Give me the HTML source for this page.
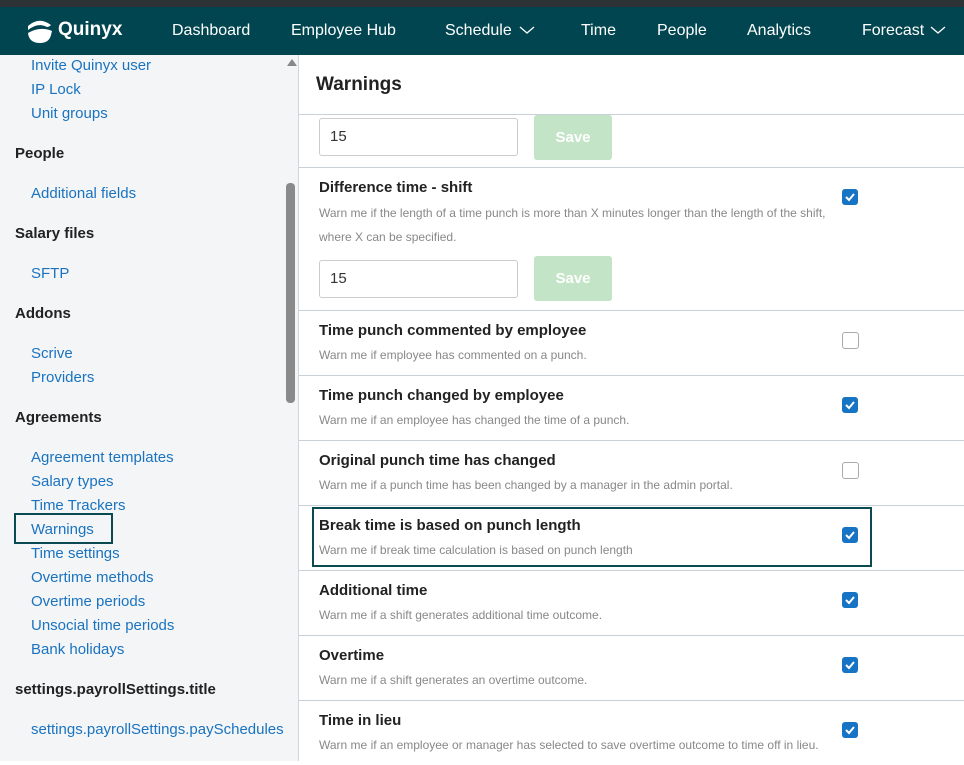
<html><head><style>
body{margin:0;width:964px;height:761px;overflow:hidden;font-family:"Liberation Sans",sans-serif;background:#fff;position:relative}
.top{position:absolute;left:0;top:0;width:964px;height:7px;background:#2d3236}
.hdr{position:absolute;left:0;top:7px;width:964px;height:48px;background:#00454f;color:#fff;font-size:16px}
.hdr span{position:absolute;top:15px;white-space:nowrap}
.hdr svg.ch{position:absolute;top:19px}
.side{position:absolute;left:0;top:55px;width:298px;height:706px;background:#f4f5f7;border-right:1px solid #cfd6dd}
.side div{position:absolute;font-size:15px}
.l{left:31px;color:#1a73c0}
.h{left:15px;font-weight:bold;color:#222}
.sb{position:absolute;left:286px;top:183px;width:9px;height:220px;background:#8a8a8a;border-radius:4px}
.main{position:absolute;left:299px;top:55px;right:0;bottom:0}
.row{position:absolute;left:0;right:0;border-top:1px solid #c8d0d8}
.t{position:absolute;left:20px;font-weight:bold;font-size:15px;color:#222}
.d{position:absolute;left:20px;font-size:12px;color:#888;white-space:nowrap}
.cb{position:absolute;left:543px;width:16px;height:16px;border-radius:3px;background:#1773c4}
.cb svg{position:absolute;left:2px;top:2px}
.cb.off{background:#fff;border:1px solid #aaa;width:15px;height:15px}
.in{position:absolute;left:20px;width:199px;height:38px;border:1px solid #ccc;border-radius:3px;font-size:15px;color:#333;line-height:36px;text-indent:10px;box-sizing:border-box}
.sv{position:absolute;left:235px;width:78px;height:45px;background:#c3e4c6;border-radius:3px;color:#fff;font-weight:bold;font-size:15px;text-align:center;line-height:45px}
</style></head><body>
<div class="top"></div>
<div class="hdr">
<svg style="position:absolute;left:26px;top:10px" width="27" height="27" viewBox="0 0 27 27"><path d="M2 9 Q13 -1 25 8 Q23 10 21 10 Q12 5 2 13Z M2 16 Q14 9 26 14 L25 18 Q23 26 14 26 Q3 26 2 16Z" fill="#fff"/></svg>
<span style="left:58px;top:12px;font-weight:bold;font-size:19px">Quinyx</span>
<span style="left:172px">Dashboard</span><span style="left:291px">Employee Hub</span><span style="left:445px">Schedule</span><svg class="ch" style="left:519px" width="16" height="9"><path d="M1 1l7 6 7-6" stroke="#fff" stroke-width="1.3" fill="none"/></svg><span style="left:581px">Time</span><span style="left:657px">People</span><span style="left:747px">Analytics</span><span style="left:862px">Forecast</span><svg class="ch" style="left:930px" width="16" height="9"><path d="M1 1l7 6 7-6" stroke="#fff" stroke-width="1.3" fill="none"/></svg>
</div>
<div class="side">
<div class="l" style="top:2px">Invite Quinyx user</div>
<div class="l" style="top:26px">IP Lock</div>
<div class="l" style="top:50px">Unit groups</div>
<div class="h" style="top:90px">People</div>
<div class="l" style="top:130px">Additional fields</div>
<div class="h" style="top:170px">Salary files</div>
<div class="l" style="top:210px">SFTP</div>
<div class="h" style="top:250px">Addons</div>
<div class="l" style="top:290px">Scrive</div>
<div class="l" style="top:314px">Providers</div>
<div class="h" style="top:354px">Agreements</div>
<div class="l" style="top:394px">Agreement templates</div>
<div class="l" style="top:418px">Salary types</div>
<div class="l" style="top:442px">Time Trackers</div>
<div style="left:14px;top:458px;width:99px;height:31px;border:2px solid #0b4a50;box-sizing:border-box"></div>
<div class="l" style="top:466px">Warnings</div>
<div class="l" style="top:490px">Time settings</div>
<div class="l" style="top:514px">Overtime methods</div>
<div class="l" style="top:538px">Overtime periods</div>
<div class="l" style="top:562px">Unsocial time periods</div>
<div class="l" style="top:586px">Bank holidays</div>
<div class="h" style="top:626px">settings.payrollSettings.title</div>
<div class="l" style="top:666px;white-space:nowrap">settings.payrollSettings.paySchedules</div>
<div style="left:287px;top:4px;width:0;height:0;border-left:5px solid transparent;border-right:5px solid transparent;border-bottom:7px solid #888"></div>
</div>
<div class="sb"></div>
<div class="main">
<div style="position:absolute;left:17px;top:19px;font-weight:bold;font-size:19px;color:#222">Warnings</div>
<div class="row" style="top:59px;height:53px"><div class="in" style="top:3px">15</div><div class="sv" style="top:0">Save</div></div>
<div class="row" style="top:112px;height:143px">
<div class="t" style="top:11px">Difference time - shift</div><div class="cb" style="top:21px"><svg width="12" height="12"><path d="M2 6l3 3 5-6" stroke="#fff" stroke-width="2" fill="none"/></svg></div>
<div class="d" style="top:33px;line-height:24px;white-space:normal;width:525px">Warn me if the length of a time punch is more than X minutes longer than the length of the shift, where X can be specified.</div>
<div class="in" style="top:92px">15</div><div class="sv" style="top:88px">Save</div></div>
<div class="row" style="top:255px;height:64px"><div class="t" style="top:11px">Time punch commented by employee</div><div class="d" style="top:37px">Warn me if employee has commented on a punch.</div><div class="cb off" style="top:21px"></div></div>
<div class="row" style="top:320px;height:64px"><div class="t" style="top:11px">Time punch changed by employee</div><div class="d" style="top:37px">Warn me if an employee has changed the time of a punch.</div><div class="cb" style="top:21px"><svg width="12" height="12"><path d="M2 6l3 3 5-6" stroke="#fff" stroke-width="2" fill="none"/></svg></div></div>
<div class="row" style="top:385px;height:64px"><div class="t" style="top:11px">Original punch time has changed</div><div class="d" style="top:37px">Warn me if a punch time has been changed by a manager in the admin portal.</div><div class="cb off" style="top:21px"></div></div>
<div class="row" style="top:450px;height:64px"><div style="position:absolute;left:13px;top:1px;width:560px;height:60px;border:2px solid #0b4a50;box-sizing:border-box"></div><div class="t" style="top:11px">Break time is based on punch length</div><div class="d" style="top:37px">Warn me if break time calculation is based on punch length</div><div class="cb" style="top:21px"><svg width="12" height="12"><path d="M2 6l3 3 5-6" stroke="#fff" stroke-width="2" fill="none"/></svg></div></div>
<div class="row" style="top:515px;height:64px"><div class="t" style="top:11px">Additional time</div><div class="d" style="top:37px">Warn me if a shift generates additional time outcome.</div><div class="cb" style="top:21px"><svg width="12" height="12"><path d="M2 6l3 3 5-6" stroke="#fff" stroke-width="2" fill="none"/></svg></div></div>
<div class="row" style="top:580px;height:64px"><div class="t" style="top:11px">Overtime</div><div class="d" style="top:37px">Warn me if a shift generates an overtime outcome.</div><div class="cb" style="top:21px"><svg width="12" height="12"><path d="M2 6l3 3 5-6" stroke="#fff" stroke-width="2" fill="none"/></svg></div></div>
<div class="row" style="top:645px;height:64px"><div class="t" style="top:11px">Time in lieu</div><div class="d" style="top:37px">Warn me if an employee or manager has selected to save overtime outcome to time off in lieu.</div><div class="cb" style="top:21px"><svg width="12" height="12"><path d="M2 6l3 3 5-6" stroke="#fff" stroke-width="2" fill="none"/></svg></div></div>
</div>
</body></html>
